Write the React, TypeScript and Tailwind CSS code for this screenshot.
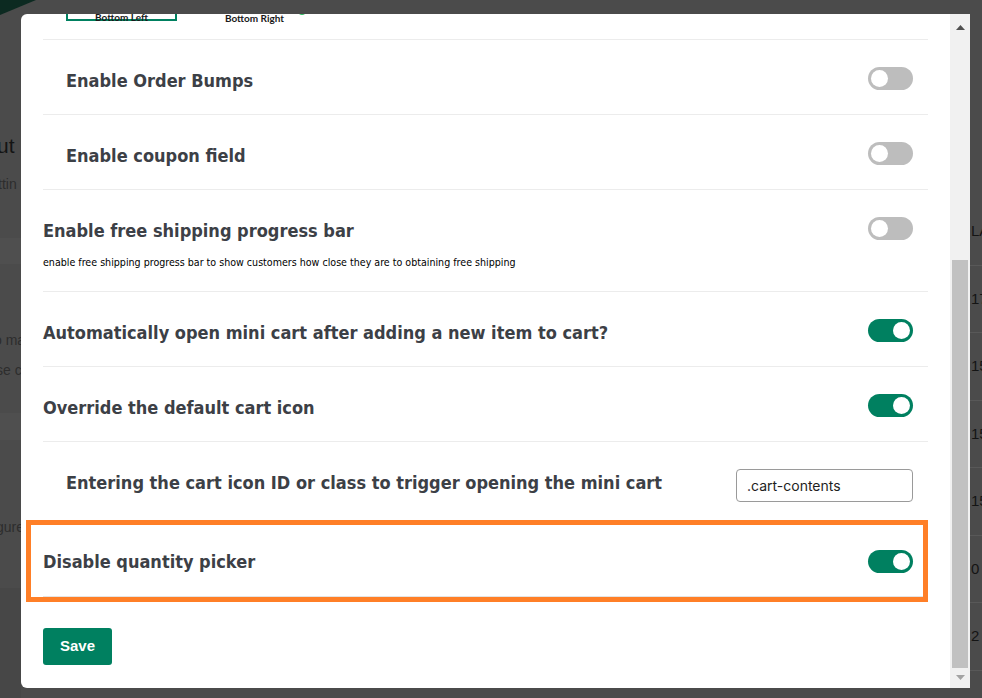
import { useState } from "react";

type RowProps = {
  title: string;
  desc?: string;
  indent?: boolean;
  on: boolean;
};

const titleFont = "font-['DejaVu_Sans_Condensed','DejaVu_Sans',sans-serif]";

function Toggle({ on }: { on: boolean }) {
  return (
    <span
      className={`inline-flex h-[23px] w-[45px] shrink-0 items-center rounded-full px-[3px] ${
        on ? "justify-end bg-[#008060]" : "justify-start bg-[#bdbdbd]"
      }`}
    >
      <span className="h-[17px] w-[17px] rounded-full bg-white" />
    </span>
  );
}

function SettingRow({ title, desc, indent, on }: RowProps) {
  return (
    <div className="flex items-start justify-between border-b border-[#ececec] pt-[27px] pr-[15px] pb-[22px]">
      <div className={`pt-[2px] ${indent ? "pl-[23px]" : ""}`}>
        <p className={`${titleFont} text-[18px] font-bold leading-[23px] text-[#3c4046]`}>{title}</p>
        {desc ? (
          <p className={`${titleFont} mt-[13px] text-[10.6px] leading-[14px] text-black`}>{desc}</p>
        ) : null}
      </div>
      <Toggle on={on} />
    </div>
  );
}

const tableCells = ["LA", "17", "15", "15", "15", "0", "2"];

function BackdropPage() {
  // page behind the modal, dimmed by the overlay
  return (
    <div className="flex h-full justify-between font-['Liberation_Sans',Arial,sans-serif]">
      <div className="flex w-[21px] flex-col overflow-hidden pt-[134px] text-[14px] leading-[18px] text-[#2d2d2d]">
        <span className="-ml-[3px] whitespace-nowrap text-[21px] leading-[24px] text-[#141414]">ut</span>
        <span className="mt-[17px] -ml-[2px] whitespace-nowrap">ttin</span>
        <div className="mt-[45px] h-[26px] bg-[#4f4f4f]" />
        <span className="mt-[67px] -ml-[6px] whitespace-nowrap">o ma</span>
        <span className="mt-[12px] -ml-[4px] whitespace-nowrap">se c</span>
        <div className="mt-[34px] h-[27px] bg-[#4f4f4f]" />
        <span className="mt-[78px] -ml-[4px] whitespace-nowrap">gure</span>
        <div className="mt-[52px] flex-1 bg-[#474747]" />
      </div>
      <div className="flex w-[12px] flex-col overflow-hidden pt-[198px] text-[15px] text-[#141414]">
        {tableCells.map((t, i) => (
          <div key={i} className="flex h-[67.5px] shrink-0 items-center border-b border-[#585858] pl-px">
            {t}
          </div>
        ))}
      </div>
    </div>
  );
}

function Scrollbar() {
  return (
    <div className="flex w-[20px] shrink-0 flex-col bg-[#f1f1f1]">
      <div className="flex h-[24px] items-center justify-center pt-[2px]">
        <svg width="9" height="5" viewBox="0 0 9 5">
          <polygon points="0,5 4.5,0 9,5" fill="#505050" />
        </svg>
      </div>
      <div className="flex-1 px-[2px] pt-[222px]">
        <div className="h-[408px] w-full bg-[#c1c1c1]" />
      </div>
      <div className="flex h-[20px] items-center justify-center pb-[2px]">
        <svg width="9" height="5" viewBox="0 0 9 5">
          <polygon points="0,0 9,0 4.5,5" fill="#a3a3a3" />
        </svg>
      </div>
    </div>
  );
}

export default function App() {
  const [cartSelector, setCartSelector] = useState(".cart-contents");

  return (
    <div className="relative h-[698px] w-[982px] overflow-hidden bg-[#4b4b4b]">
      <BackdropPage />
      <svg className="absolute left-0 top-0" width="40" height="18" viewBox="0 0 40 18">
        <polygon points="0,0 36,0 0,15" fill="#0c2a21" />
      </svg>

      <div className="absolute left-[21px] top-[14px] flex h-[674px] w-[949px] overflow-hidden rounded-[6px] rounded-tr-none rounded-br-none bg-white">
        <div className="flex-1 px-[22px]">
          {/* position picker, scrolled mostly out of view */}
          <div className="flex h-[26px] items-end gap-[22px] overflow-hidden border-b border-[#ececec] pb-[18px] pl-[23px] font-['Lato',sans-serif]">
            <div className="flex h-[40px] w-[111px] items-end justify-center border-2 border-t-0 border-[#008060] text-[10px] font-bold leading-[10px] text-[#1a1a1a]">
              <span className="mb-[-3px]">Bottom Left</span>
            </div>
            <div className="flex h-[40px] w-[111px] flex-col items-center justify-end text-[10px] font-bold leading-[10px] text-[#1a1a1a]">
              <span className="mb-[-2px] ml-[94px] h-[10px] w-[10px] shrink-0 rounded-full bg-[#2dbe60]" />
              <span className="mb-[-2px]">Bottom Right</span>
            </div>
          </div>

          <SettingRow title="Enable Order Bumps" indent on={false} />
          <SettingRow title="Enable coupon field" indent on={false} />
          <SettingRow
            title="Enable free shipping progress bar"
            desc="enable free shipping progress bar to show customers how close they are to obtaining free shipping"
            on={false}
          />
          <SettingRow title="Automatically open mini cart after adding a new item to cart?" on />
          <SettingRow title="Override the default cart icon" on />

          <div className="flex items-start justify-between pt-[27px] pr-[15px] pb-[18px]">
            <p className={`${titleFont} pl-[23px] pt-[2px] text-[18px] font-bold leading-[23px] text-[#3c4046]`}>
              Entering the cart icon ID or class to trigger opening the mini cart
            </p>
            <input
              type="text"
              value={cartSelector}
              onChange={(e) => setCartSelector(e.target.value)}
              className="h-[33px] w-[177px] rounded-[4px] border border-[#9a9a9a] bg-white px-[10px] font-['Inter',sans-serif] text-[14px] text-[#1e1e1e] outline-none"
            />
          </div>

          {/* highlighted row */}
          <div className="ml-[-17px] border-[5px] border-[#ff7f27] pl-[12px]">
            <div className="flex items-center justify-between border-b border-[#e4e4e4] pt-[25px] pr-[10px] pb-[23px]">
              <p className={`${titleFont} text-[18px] font-bold leading-[23px] text-[#3c4046]`}>Disable quantity picker</p>
              <Toggle on />
            </div>
          </div>

          <button
            type="button"
            className="mt-[26px] h-[37px] w-[69px] rounded-[3px] bg-[#008060] font-['Liberation_Sans',Arial,sans-serif] text-[15px] font-bold text-white"
          >
            Save
          </button>
        </div>
        <Scrollbar />
      </div>
    </div>
  );
}
